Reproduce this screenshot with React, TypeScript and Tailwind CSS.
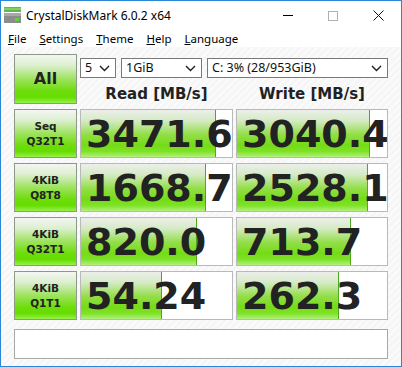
import React from 'react'

const rows = [
  { l1: 'Seq', l2: 'Q32T1', read: '3471.6', write: '3040.4' },
  { l1: '4KiB', l2: 'Q8T8', read: '1668.7', write: '2528.1' },
  { l1: '4KiB', l2: 'Q32T1', read: '820.0', write: '713.7' },
  { l1: '4KiB', l2: 'Q1T1', read: '54.24', write: '262.3' },
]

// CrystalDiskMark draws its bars on a log scale
function barWidth(v: string) {
  return Math.round(29.7 * (Math.log10(parseFloat(v)) + 1))
}

const greenBtn =
  'border border-[#8b9a87] bg-[linear-gradient(to_bottom,#f4f6f2_0%,#dcefcf_22%,#9ee35e_50%,#6ddd0a_75%,#66dd00_88%,#97ef4c_100%)]'

function Chevron() {
  return (
    <svg width="11" height="7" viewBox="0 0 11 7" className="shrink-0">
      <polyline points="1,1 5.5,5.5 10,1" fill="none" stroke="#1e1e1e" strokeWidth="1.4" />
    </svg>
  )
}

function Select({ value, width }: { value: string; width: string }) {
  return (
    <div
      className={`${width} flex h-[20px] items-center justify-between border border-[#7a7a7a] bg-white pl-[4px] pr-[5px] text-[12.5px] text-[#111] font-['Noto_Sans',sans-serif]`}
    >
      <span className="leading-none">{value}</span>
      <Chevron />
    </div>
  )
}

function Value({ v }: { v: string }) {
  return (
    <div className="relative h-[49px] overflow-hidden border border-[#b9b9b9] bg-white">
      <div
        className="absolute inset-y-0 left-0 border-r border-[#4ea91f] bg-[linear-gradient(to_bottom,#eceeea_0%,#d5ebc6_22%,#93de48_52%,#74dc16_75%,#7ee226_88%,#b2f07e_100%)]"
        style={{ width: barWidth(v) }}
      />
      <div className="relative flex h-full items-center pl-[5px] text-[38px] font-bold leading-none text-[#222] font-['DejaVu_Sans',sans-serif]">
        {v}
      </div>
    </div>
  )
}

function DriveIcon() {
  return (
    <svg width="17" height="16" viewBox="0 0 17 16">
      <rect x="0" y="0" width="17" height="5" fill="#5fb84a" />
      <rect x="0" y="1" width="17" height="2" fill="#7fd06a" />
      <rect x="0" y="6" width="17" height="10" fill="#8c8c8c" />
      <rect x="0" y="6" width="17" height="3" fill="#a8a8a8" />
      <rect x="11" y="11" width="4" height="3" fill="#5fd040" />
    </svg>
  )
}

export default function App() {
  return (
    <div className="flex h-[367px] w-[402px] flex-col border border-[#2a86d6] bg-white font-['Noto_Sans',sans-serif] text-[#111]">
      {/* title bar */}
      <div className="flex h-[29px] items-center bg-white">
        <div className="ml-[3px] mt-[-2px]">
          <DriveIcon />
        </div>
        <span className="ml-[5px] text-[12px] text-black">CrystalDiskMark 6.0.2 x64</span>
        <div className="ml-auto flex items-center">
          <div className="flex w-[45px] items-center justify-center">
            <div className="h-px w-[10px] bg-black" />
          </div>
          <div className="flex w-[45px] items-center justify-center">
            <div className="h-[10px] w-[10px] border border-[#b0b0b0]" />
          </div>
          <div className="flex w-[46px] items-center justify-center">
            <svg width="11" height="11" viewBox="0 0 11 11">
              <path d="M0.5 0.5 L10.5 10.5 M10.5 0.5 L0.5 10.5" stroke="#111" strokeWidth="1" />
            </svg>
          </div>
        </div>
      </div>

      {/* menu bar */}
      <div className="flex h-[17px] items-center gap-[13px] bg-white pl-[7px] text-[11.5px] leading-none text-black">
        <span><u>F</u>ile</span>
        <span><u>S</u>ettings</span>
        <span><u>T</u>heme</span>
        <span><u>H</u>elp</span>
        <span><u>L</u>anguage</span>
      </div>

      {/* main panel */}
      <div className="flex-1 bg-[repeating-linear-gradient(135deg,#f6f6f6_0px,#f6f6f6_3px,#fbfbfb_3px,#fbfbfb_5px)] pl-[13px] pt-[7px]">
        <div className="grid grid-cols-[63px_153px_152px] gap-x-[3px] gap-y-[5px]">
          <div
            className={`${greenBtn} flex h-[50px] items-center justify-center text-[16px] font-bold text-[#222] font-['DejaVu_Sans',sans-serif]`}
          >
            All
          </div>
          <div className="col-span-2 flex flex-col">
            <div className="mt-[4px] flex gap-[5px]">
              <Select value="5" width="w-[36px]" />
              <Select value="1GiB" width="w-[81px]" />
              <Select value="C: 3% (28/953GiB)" width="w-[181px]" />
            </div>
            <div className="mt-[9px] grid grid-cols-[153px_152px] gap-x-[3px] text-center text-[15px] font-bold leading-none text-[#222] font-['DejaVu_Sans',sans-serif]">
              <span>Read [MB/s]</span>
              <span>Write [MB/s]</span>
            </div>
          </div>

          {rows.map((r) => (
            <React.Fragment key={r.l2}>
              <div
                className={`${greenBtn} flex h-[49px] flex-col items-center justify-center text-[10.5px] font-bold leading-[15px] text-[#222] font-['DejaVu_Sans',sans-serif]`}
              >
                <span>{r.l1}</span>
                <span>{r.l2}</span>
              </div>
              <Value v={r.read} />
              <Value v={r.write} />
            </React.Fragment>
          ))}
        </div>

        <div className="mt-[9px] h-[30px] w-[374px] border border-[#a8a8a8] bg-white" />
      </div>
    </div>
  )
}
